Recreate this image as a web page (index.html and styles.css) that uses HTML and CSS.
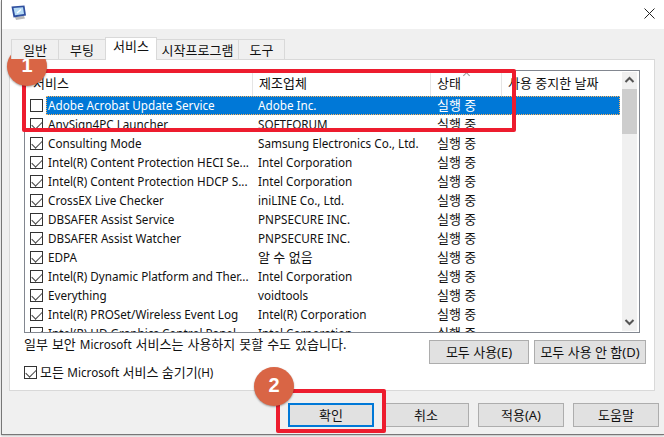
FILE: index.html
```html
<!DOCTYPE html>
<html lang="ko">
<head>
<meta charset="utf-8">
<title>시스템 구성</title>
<link rel="stylesheet" href="styles.css">
</head>
<body>
<div class="window">
  <header class="titlebar">
    <svg class="app-icon" width="16" height="16" viewBox="0 0 16 16">
      <path d="M4 12 L13 11 L14 13.5 L5 15 Z" fill="#b8b8b8"/>
      <path d="M0.5 1.5 L13.5 0.5 L15 10.5 L2.5 12.5 Z" fill="#2f4f9f"/>
      <path d="M2.5 3 L12 2.2 L13 9 L4 10.3 Z" fill="#b7dcf6"/>
      <path d="M6 8 L10 4.5" stroke="#ffffff" stroke-width="1.4"/>
    </svg>
    <svg class="close-icon" width="11" height="11" viewBox="0 0 11 11">
      <path d="M0.5 0.5 L10.5 10.5 M10.5 0.5 L0.5 10.5" stroke="#222" stroke-width="1" fill="none"/>
    </svg>
  </header>
  <div class="client">
    <nav class="tabs">
      <span class="tab t1">일반</span>
      <span class="tab t2">부팅</span>
      <span class="tab active">서비스</span>
      <span class="tab t4">시작프로그램</span>
      <span class="tab t5">도구</span>
    </nav>
    <section class="panel">
      <div class="list">
        <div class="list-main">
          <div class="row head">
            <span class="c1">서비스</span>
            <span class="c2">제조업체</span>
            <span class="c3">상태<i class="sort"></i></span>
            <span class="c4">사용 중지한 날짜</span>
          </div>
          <div class="row selected"><span class="box"></span><div class="cells"><span class="c1 en">Adobe Acrobat Update Service</span><span class="c2 en">Adobe Inc.</span><span class="c3">실행 중</span></div></div>
          <div class="row"><span class="box on"></span><div class="cells"><span class="c1 en">AnySign4PC Launcher</span><span class="c2 en">SOFTFORUM</span><span class="c3">실행 중</span></div></div>
          <div class="row"><span class="box on"></span><div class="cells"><span class="c1 en">Consulting Mode</span><span class="c2 en">Samsung Electronics Co., Ltd.</span><span class="c3">실행 중</span></div></div>
          <div class="row"><span class="box on"></span><div class="cells"><span class="c1 en">Intel(R) Content Protection HECI Se...</span><span class="c2 en">Intel Corporation</span><span class="c3">실행 중</span></div></div>
          <div class="row"><span class="box on"></span><div class="cells"><span class="c1 en">Intel(R) Content Protection HDCP S...</span><span class="c2 en">Intel Corporation</span><span class="c3">실행 중</span></div></div>
          <div class="row"><span class="box on"></span><div class="cells"><span class="c1 en">CrossEX Live Checker</span><span class="c2 en">iniLINE Co., Ltd.</span><span class="c3">실행 중</span></div></div>
          <div class="row"><span class="box on"></span><div class="cells"><span class="c1 en">DBSAFER Assist Service</span><span class="c2 en">PNPSECURE INC.</span><span class="c3">실행 중</span></div></div>
          <div class="row"><span class="box on"></span><div class="cells"><span class="c1 en">DBSAFER Assist Watcher</span><span class="c2 en">PNPSECURE INC.</span><span class="c3">실행 중</span></div></div>
          <div class="row"><span class="box on"></span><div class="cells"><span class="c1 en">EDPA</span><span class="c2">알 수 없음</span><span class="c3">실행 중</span></div></div>
          <div class="row"><span class="box on"></span><div class="cells"><span class="c1 en">Intel(R) Dynamic Platform and Ther...</span><span class="c2 en">Intel Corporation</span><span class="c3">실행 중</span></div></div>
          <div class="row"><span class="box on"></span><div class="cells"><span class="c1 en">Everything</span><span class="c2 en">voidtools</span><span class="c3">실행 중</span></div></div>
          <div class="row"><span class="box on"></span><div class="cells"><span class="c1 en">Intel(R) PROSet/Wireless Event Log</span><span class="c2 en">Intel(R) Corporation</span><span class="c3">실행 중</span></div></div>
          <div class="row"><span class="box on"></span><div class="cells"><span class="c1 en">Intel(R) HD Graphics Control Panel</span><span class="c2 en">Intel Corporation</span><span class="c3">실행 중</span></div></div>
        </div>
        <div class="scrollbar">
          <svg class="arrow" width="15" height="17" viewBox="0 0 15 17"><path d="M3.5 10 L7.5 6 L11.5 10" stroke="#555" stroke-width="2" fill="none"/></svg>
          <div class="thumb"></div>
          <svg class="arrow bottom" width="15" height="17" viewBox="0 0 15 17"><path d="M3.5 7 L7.5 11 L11.5 7" stroke="#555" stroke-width="2" fill="none"/></svg>
        </div>
      </div>
      <div class="notes">
        <div class="note-text">
          <p class="note">일부 보안 <span class="en">Microsoft</span> 서비스는 사용하지 못할 수도 있습니다.</p>
          <label class="hide"><span class="box on"></span><span>모든 <span class="en">Microsoft</span> 서비스 숨기기<span class="en">(H)</span></span></label>
        </div>
        <div class="side-buttons">
          <button class="btn enable">모두 사용(E)</button>
          <button class="btn disable">모두 사용 안 함(D)</button>
        </div>
      </div>
    </section>
    <footer class="actions">
      <button class="btn main ok">확인</button>
      <button class="btn main">취소</button>
      <button class="btn main">적용(A)</button>
      <button class="btn main">도움말</button>
    </footer>
  </div>
</div>
<div class="mark mark-one"></div>
<div class="mark mark-two"></div>
<div class="badge badge-one">1</div>
<div class="badge badge-two">2</div>
</body>
</html>
```
FILE: styles.css
```css
* { box-sizing: border-box; }
html, body { margin: 0; height: 100%; }
body {
  position: relative;
  width: 664px;
  height: 437px;
  overflow: hidden;
  background: #ffffff;
  font: 13px/16px "Noto Sans", "Noto Sans CJK KR", sans-serif;
  color: #111;
}
.en { font-size: 11.7px; }
.window {
  height: 435px;
  margin-left: 1px;
  border-left: 1px solid #777;
  border-bottom: 1px solid #777;
  box-shadow: 0 1px 2px #bbb;
  display: flex;
  flex-direction: column;
}
.titlebar {
  height: 29px;
  background: #fff;
  flex: none;
  display: flex;
  align-items: flex-start;
  justify-content: space-between;
  padding: 5px 9px 0 9px;
}
.close-icon { margin-top: 3px; }
.client {
  flex: 1;
  background: #f0f0f0;
  padding: 11px 5px 0 7px;
  display: flex;
  flex-direction: column;
}
.tabs {
  display: flex;
  height: 19px;
  align-items: flex-end;
  padding-left: 2px;
  position: relative;
  z-index: 1;
}
.tab {
  height: 20px;
  background: #f0f0f0;
  border: 1px solid #d9d9d9;
  border-bottom: 0;
  margin-left: -1px;
  text-align: center;
  line-height: 20px;
  white-space: nowrap;
}
.t1 { width: 48px; margin-left: 0; }
.t2 { width: 48px; }
.active {
  width: 52px;
  height: 23px;
  margin-bottom: -1px;
  background: #fff;
  line-height: 17px;
  padding-bottom: 3px;
  position: relative;
}
.t4 { width: 83px; }
.t5 { width: 47px; }
.panel {
  width: 646px;
  height: 332px;
  flex: none;
  background: #fff;
  border: 1px solid #d9d9d9;
  padding: 10px 8px 0 14px;
}
.list {
  width: 616px;
  height: 263px;
  border: 1px solid #828790;
  display: flex;
  overflow: hidden;
}
.list-main { width: 596px; flex: none; }
.row {
  height: 19px;
  display: flex;
  align-items: center;
  white-space: nowrap;
}
.row .box { margin: 0 3px 0 5px; }
.cells {
  width: 574px;
  height: 19px;
  flex: none;
  display: flex;
  align-items: center;
  padding: 0 0 2px 2px;
}
.c1 { width: 210px; flex: none; overflow: hidden; }
.c2 { width: 179px; flex: none; }
.c3 { width: 71px; flex: none; }
.head { height: 25px; }
.head span { height: 25px; line-height: 24px; }
.head .c1 { width: 227px; padding-left: 8px; }
.head .c2, .head .c3, .head .c4 {
  border-left: 1px solid #e5e5e5;
  padding-left: 6px;
}
.head .c2 { width: 178px; }
.head .c3 { width: 71px; position: relative; }
.head .c4 { width: 120px; flex: none; }
.sort {
  position: absolute;
  left: 33px;
  top: 2px;
  width: 5px;
  height: 5px;
  border-top: 1px solid #999;
  border-left: 1px solid #999;
  transform: rotate(45deg);
}
.selected .cells {
  background: #0078d7;
  color: #fff;
  outline: 1px dotted #ffb45c;
  outline-offset: -1px;
}
.box {
  width: 13px;
  height: 13px;
  flex: none;
  display: inline-block;
  background: #fff;
  border: 1px solid #333;
}
.box.on { position: relative; }
.box.on::after {
  content: "";
  position: absolute;
  left: 3px;
  top: 0;
  width: 5px;
  height: 9px;
  border: solid #444;
  border-width: 0 1px 1px 0;
  transform: rotate(45deg);
}
.scrollbar {
  width: 15px;
  margin: 1px 0 1px 1px;
  flex: none;
  background: #f0f0f0;
  position: relative;
}
.arrow { display: block; }
.arrow.bottom { position: absolute; bottom: 1px; left: 0; }
.thumb { height: 45px; background: #cdcdcd; }
.notes {
  display: flex;
  justify-content: space-between;
}
.note-text { padding-top: 3px; }
.note { margin: 0; line-height: 16px; word-spacing: 0.6px; }
.hide {
  display: flex;
  align-items: center;
  gap: 3px;
  margin-top: 12px;
  line-height: 16px;
}
.side-buttons {
  display: flex;
  gap: 5px;
  padding-top: 7px;
}
.btn {
  font: inherit;
  color: #111;
  background: #e1e1e1;
  border: 1px solid #adadad;
  height: 24px;
  padding: 0;
  white-space: nowrap;
}
.enable { width: 100px; }
.disable { width: 112px; }
.actions {
  display: flex;
  justify-content: flex-end;
  gap: 9px;
  padding: 12px 0 0 0;
}
.main { width: 86px; height: 24px; }
.ok { border: 2px solid #0078d7; }
.mark {
  position: absolute;
  border: 4px solid #ed1c2e;
  border-radius: 2px;
}
.mark-one { left: 22px; top: 69px; width: 494px; height: 63px; }
.mark-two { left: 276px; top: 389px; width: 110px; height: 44px; }
.badge {
  position: absolute;
  width: 40px;
  height: 39px;
  border-radius: 50%;
  background: #d96545;
  color: #fff;
  font: bold 20px/37px "Liberation Sans", sans-serif;
  text-align: center;
  box-shadow: 0 1px 2px rgba(0,0,0,.35);
}
.badge-one { left: 7px; top: 47px; }
.badge-two { left: 254px; top: 367px; }
```
